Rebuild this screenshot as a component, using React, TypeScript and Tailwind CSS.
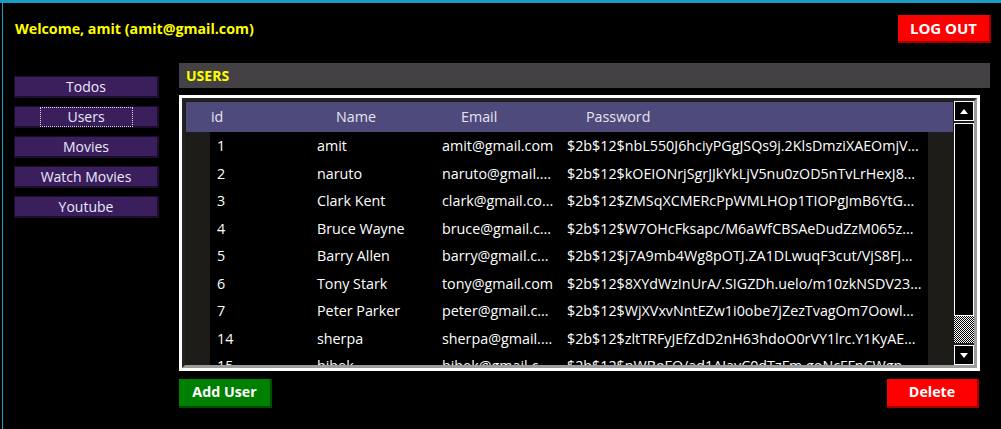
import React from "react";

// Users admin screen: welcome bar, side nav, users grid with a classic scrollbar
type User = {
  id: number;
  name: string;
  email: string;
  password: string;
};

const users: User[] = [
  { id: 1, name: "amit", email: "amit@gmail.com", password: "$2b$12$nbL550J6hciyPGgJSQs9j.2KlsDmziXAEOmjV..." },
  { id: 2, name: "naruto", email: "naruto@gmail....", password: "$2b$12$kOEIONrjSgrJJkYkLjV5nu0zOD5nTvLrHexJ8..." },
  { id: 3, name: "Clark Kent", email: "clark@gmail.co...", password: "$2b$12$ZMSqXCMERcPpWMLHOp1TIOPgJmB6YtG..." },
  { id: 4, name: "Bruce Wayne", email: "bruce@gmail.c...", password: "$2b$12$W7OHcFksapc/M6aWfCBSAeDudZzM065z..." },
  { id: 5, name: "Barry Allen", email: "barry@gmail.c...", password: "$2b$12$j7A9mb4Wg8pOTJ.ZA1DLwuqF3cut/VjS8FJ..." },
  { id: 6, name: "Tony Stark", email: "tony@gmail.com", password: "$2b$12$8XYdWzInUrA/.SIGZDh.uelo/m10zkNSDV23..." },
  { id: 7, name: "Peter Parker", email: "peter@gmail.c...", password: "$2b$12$WjXVxvNntEZw1i0obe7jZezTvagOm7Oowl..." },
  { id: 14, name: "sherpa", email: "sherpa@gmail....", password: "$2b$12$zltTRFyJEfZdD2nH63hdoO0rVY1lrc.Y1KyAE..." },
  { id: 15, name: "bibek", email: "bibek@gmail.c...", password: "$2b$12$pWBoFQ/ad1AJavC0dTzFm.goNcFFnCWgn..." },
];

const navItems = ["Todos", "Users", "Movies", "Watch Movies", "Youtube"];

function Arrow({ down }: { down?: boolean }) {
  return (
    <svg width="8" height="5" viewBox="0 0 8 5">
      <polygon points={down ? "0,0 8,0 4,5" : "0,5 8,5 4,0"} fill="#ffffff" />
    </svg>
  );
}

export default function App() {
  return (
    <div className="w-[1001px] h-[429px] bg-black border-t-[3px] border-[#1a9bc2] overflow-hidden font-['Open_Sans',sans-serif]">
      <div className="ml-[2px] h-full border-l border-[#1a9bc2] flex flex-col">
        {/* Top bar */}
        <div className="flex items-center justify-between pl-[12px] pr-[10px] pt-[12px]">
          <span className="text-[14.25px] font-bold text-[#ffff00]">Welcome, amit (amit@gmail.com)</span>
          <button className="w-[93px] h-[28px] bg-[#ff0000] border-r-2 border-b-2 border-[#a30000] text-white font-bold text-[15px] leading-none">
            LOG OUT
          </button>
        </div>

        <div className="flex mt-[20px]">
          {/* Side nav */}
          <div className="ml-[11px] w-[145px] mt-[13px] flex flex-col gap-[8px]">
            {navItems.map((item) => (
              <button
                key={item}
                className="h-[22px] bg-[#3b1f5c] border border-[#1c0d2e] border-b-2 border-r-2 text-[#ece8ff] text-[14px] leading-none flex items-center justify-center"
              >
                {item === "Users" ? (
                  <span className="w-[93px] h-[20px] border border-dotted border-[#d8d8d8] flex items-center justify-center">
                    {item}
                  </span>
                ) : (
                  item
                )}
              </button>
            ))}
          </div>

          {/* Content */}
          <div className="ml-[20px] w-[811px] flex flex-col">
            <div className="h-[25px] bg-[#434143] pl-[7px] flex items-center text-[14px] font-bold text-[#ffff00]">
              USERS
            </div>

            <div className="mt-[7px] w-[801px] h-[276px] border-[3px] border-white">
              <div className="h-full border-[3px] border-t-[#222222] border-l-[#222222] border-r-[#9c9c9c] border-b-[#9c9c9c] bg-[#1e1c18] flex pl-[1px]">
                {/* Grid */}
                <div className="w-[767px] h-full flex flex-col overflow-hidden pt-[1px]">
                  <div className="h-[30px] shrink-0 bg-[#4f4a7c] flex items-center text-[14.3px] text-[#e6e4f0]">
                    <span className="pl-[25px] w-[125px]">id</span>
                    <span className="pl-[25px] w-[125px]">Name</span>
                    <span className="pl-[25px] w-[125px]">Email</span>
                    <span className="pl-[25px]">Password</span>
                  </div>
                  {users.map((u) => (
                    <div key={u.id} className="h-[27.5px] shrink-0 flex text-[14.3px] text-white">
                      <div className="w-[24px] bg-[#1e1c18]" />
                      <div className="w-[100px] bg-black pl-[7px] flex items-center">{u.id}</div>
                      <div className="w-[125px] bg-black pl-[7px] flex items-center whitespace-nowrap overflow-hidden">{u.name}</div>
                      <div className="w-[125px] bg-black pl-[7px] flex items-center whitespace-nowrap overflow-hidden">{u.email}</div>
                      <div className="w-[368px] bg-black pl-[7px] flex items-center whitespace-nowrap overflow-hidden">{u.password}</div>
                      <div className="w-[25px] bg-[#1e1c18]" />
                    </div>
                  ))}
                </div>

                {/* Scrollbar */}
                <div className="w-[21px] h-full flex flex-col gap-[2px] pl-[1px] bg-[#1e1c18]">
                  <div className="h-[20px] border border-white bg-black flex items-center justify-center">
                    <Arrow />
                  </div>
                  <div className="flex-1 border border-white bg-black" />
                  <div className="h-[27px] -mt-[2px] bg-[image:repeating-conic-gradient(#ffffff_0_25%,#000000_0_50%)] bg-[length:2px_2px]" />
                  <div className="h-[20px] border border-white bg-black flex items-center justify-center">
                    <Arrow down />
                  </div>
                </div>
              </div>
            </div>

            <div className="mt-[8px] w-[800px] flex justify-between">
              <button className="w-[93px] h-[29px] bg-[#008000] border-r-2 border-b-2 border-[#004d00] text-white font-bold text-[14.25px] leading-none">
                Add User
              </button>
              <button className="w-[92px] h-[29px] bg-[#ff0000] border-r-2 border-b-2 border-[#a30000] text-white font-bold text-[14.25px] leading-none">
                Delete
              </button>
            </div>
          </div>
        </div>
      </div>
    </div>
  );
}
